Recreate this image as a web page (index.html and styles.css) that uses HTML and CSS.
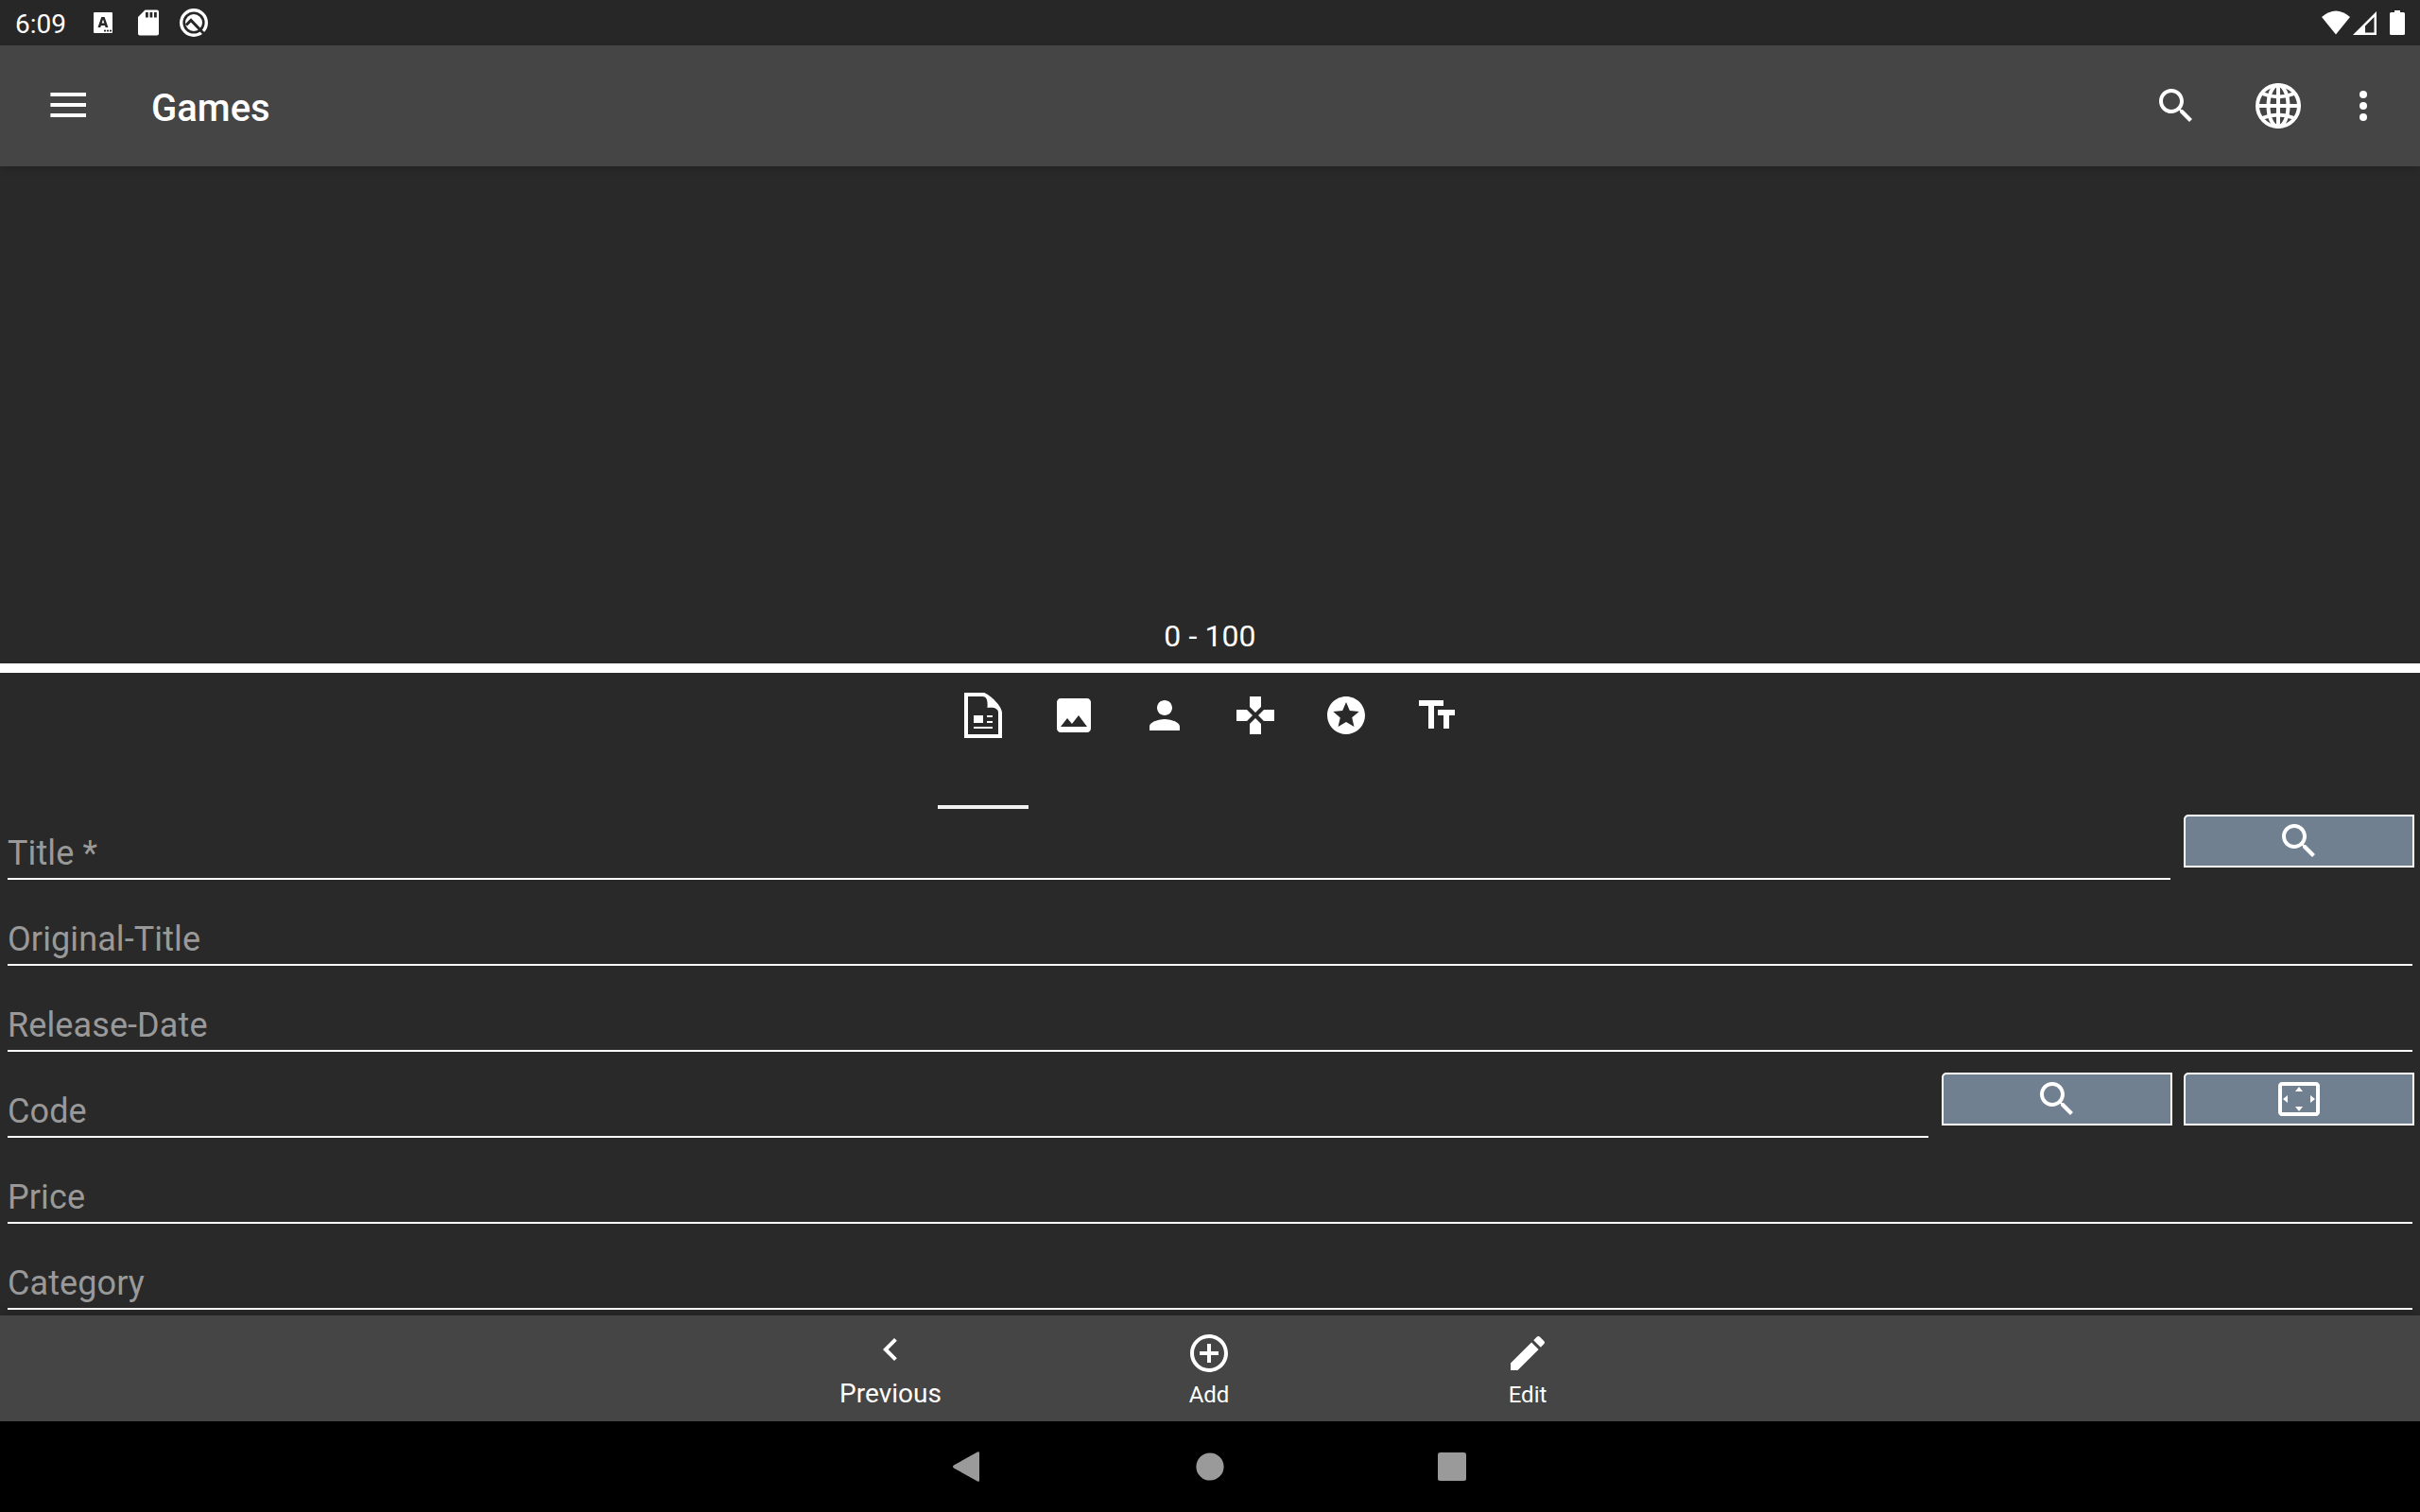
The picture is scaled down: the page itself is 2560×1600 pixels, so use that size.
FILE: index.html
```html
<!DOCTYPE html>
<html lang="en">
<head>
<meta charset="utf-8">
<title>Games</title>
<link rel="stylesheet" href="styles.css">
</head>
<body>
<svg class="defs" aria-hidden="true">
  <symbol id="search" viewBox="0 0 24 24"><path d="M15.5 14h-.79l-.28-.27C15.41 12.59 16 11.11 16 9.5 16 5.91 13.09 3 9.5 3S3 5.91 3 9.5 5.91 16 9.5 16c1.61 0 3.09-.59 4.23-1.57l.27.28v.79l5 4.99L20.49 19l-4.99-5zm-6 0C7.01 14 5 11.99 5 9.5S7.01 5 9.5 5 14 7.01 14 9.5 11.99 14 9.5 14z"/></symbol>
</svg>
<div class="screen">
  <header class="status-bar">
    <span class="clock">6:09</span>
    <svg class="notif" viewBox="0 0 132 48">
      <path fill-rule="evenodd" d="M3 13h16q1 0 1 1v20q0 1-1 1H1q-1 0-1-1V14q0-1 1-1zM8.300 18L4.500 29h2.800l.6-2h4.100l.6 2h2.800L11.600 18zM8.700 24.500L10 20.500l1.300 4z"/>
      <g class="cut"><circle cx="12" cy="32.600" r="1.100"/><circle cx="15" cy="32.600" r="1.100"/><circle cx="18" cy="32.600" r="1.100"/></g>
      <path d="M54.500 10.500H67q2 0 2 2V35.500q0 2-2 2H49q-2 0-2-2V18z"/>
      <path class="cut" d="M55 13h2.800v5.500H55zM59.500 13h2.800v5.500h-2.800zM64 13h2.800v5.500H64z"/>
      <circle class="ring" cx="106" cy="24" r="13.300"/>
      <circle cx="106" cy="24" r="9"/>
      <path class="gap" d="M98 26.500L103 21.500 117 36"/>
    </svg>
    <svg class="signals" viewBox="0 0 88 48">
      <path d="M0 18Q15 5 30 18L15 36.500z"/>
      <path fill-rule="evenodd" d="M33 37L58 12V37zM46 34.500H55.500V18L46 27.500z"/>
      <path d="M77 11h6v2h3.500q1.500 0 1.500 1.500v21q0 1.500-1.500 1.500h-13q-1.500 0-1.500-1.500v-21q0-1.500 1.500-1.500H77z"/>
    </svg>
  </header>
  <div class="app-bar">
    <svg class="menu" viewBox="0 0 38 26"><path d="M.4 0h37.600v4H.4zM.4 11h37.600v4H.4zM.4 22h37.600v4H.4z"/></svg>
    <h1 class="title">Games</h1>
    <svg class="icon"><use href="#search"/></svg>
    <svg class="icon globe" viewBox="0 0 48 48">
      <circle cx="24" cy="24" r="22"/>
      <ellipse cx="24" cy="24" rx="10.500" ry="22"/>
      <path d="M24 2v44M2 24h44M7 11Q24 18 41 11M7 37Q24 30 41 37"/>
    </svg>
    <svg class="icon" viewBox="0 0 48 48"><circle cx="24" cy="12" r="4"/><circle cx="24" cy="24" r="4"/><circle cx="24" cy="36" r="4"/></svg>
  </div>
  <section class="list-pane"><span class="range">0 - 100</span></section>
  <nav class="tabs">
    <span class="tab selected"><svg class="icon" viewBox="0 0 48 48"><path fill-rule="evenodd" d="M4 0H25C31 2 44 14 44 21V48H4zM8 4V44H40V21C40 17 36 15 28.500 16 29 8 28 4 23 4z"/><path d="M14 24h10v8H14zM28 24h6v2h-6zM28 30h6v2h-6zM14 36h20v2H14z"/></svg></span>
    <span class="tab"><svg class="icon" viewBox="0 0 24 24"><path d="M21 19V5c0-1.100-.9-2-2-2H5c-1.100 0-2 .9-2 2v14c0 1.100.9 2 2 2h14c1.100 0 2-.9 2-2zM8.500 13.500l2.500 3.010L14.500 12l4.500 6H5l3.500-4.500z"/></svg></span>
    <span class="tab"><svg class="icon" viewBox="0 0 24 24"><path d="M12 12c2.210 0 4-1.790 4-4s-1.790-4-4-4-4 1.790-4 4 1.790 4 4 4zm0 2c-2.670 0-8 1.340-8 4v2h16v-2c0-2.660-5.330-4-8-4z"/></svg></span>
    <span class="tab"><svg class="icon" viewBox="0 0 24 24"><path d="M15 7.500V2H9v5.500l3 3 3-3zM7.500 9H2v6h5.500l3-3-3-3zM9 16.500V22h6v-5.500l-3-3-3 3zM16.500 9l-3 3 3 3H22V9h-5.500z"/></svg></span>
    <span class="tab"><svg class="icon" viewBox="0 0 24 24"><path d="M11.990 2C6.470 2 2 6.480 2 12s4.470 10 9.990 10C17.520 22 22 17.520 22 12S17.520 2 11.990 2zm4.240 16L12 15.450 7.770 18l1.120-4.810-3.730-3.230 4.920-.42L12 5l1.920 4.530 4.920.42-3.730 3.230L16.230 18z"/></svg></span>
    <span class="tab"><svg class="icon" viewBox="0 0 24 24"><path d="M2.500 4v3h5v12h3V7h5V4h-13zm19 5h-9v3h3v7h3v-7h3V9z"/></svg></span>
  </nav>
  <main class="form">
    <div class="row"><label class="field">Title *</label><button class="btn"><svg class="icon"><use href="#search"/></svg></button></div>
    <div class="row"><label class="field">Original-Title</label></div>
    <div class="row"><label class="field">Release-Date</label></div>
    <div class="row"><label class="field">Code</label><button class="btn"><svg class="icon"><use href="#search"/></svg></button><button class="btn"><svg class="icon" viewBox="0 0 24 24"><path d="M12.010 5.500L10 8h4l-1.990-2.500zM18 10v4l2.500-1.990L18 10zM6 10l-2.500 2.010L6 14v-4zm8 6h-4l2.010 2.500L14 16zm7-13H3c-1.100 0-2 .9-2 2v14c0 1.100.9 2 2 2h18c1.100 0 2-.9 2-2V5c0-1.100-.9-2-2-2zm0 16.010H3V4.990h18v14.020z"/></svg></button></div>
    <div class="row"><label class="field">Price</label></div>
    <div class="row"><label class="field">Category</label></div>
  </main>
  <footer class="bottom-bar">
    <div class="action active"><svg class="icon" viewBox="0 0 24 24"><path d="M15.410 7.410L14 6l-6 6 6 6 1.410-1.410L10.830 12z"/></svg><span>Previous</span></div>
    <div class="action"><svg class="icon" viewBox="0 0 24 24"><path d="M13 7h-2v4H7v2h4v4h2v-4h4v-2h-4V7zm-1-5C6.480 2 2 6.480 2 12s4.480 10 10 10 10-4.480 10-10S17.520 2 12 2zm0 18c-4.410 0-8-3.590-8-8s3.590-8 8-8 8 3.590 8 8-3.590 8-8 8z"/></svg><span>Add</span></div>
    <div class="action"><svg class="icon" viewBox="0 0 24 24"><path d="M3 17.250V21h3.750L17.810 9.940l-3.750-3.750L3 17.250zM20.710 7.040c.39-.39.39-1.020 0-1.410l-2.340-2.340c-.39-.39-1.020-.39-1.410 0l-1.830 1.830 3.750 3.750 1.830-1.830z"/></svg><span>Edit</span></div>
  </footer>
  <div class="system-nav">
    <svg viewBox="0 0 32 32"><path d="M1 14.500L26 .5q2-1 2 1v29q0 2-2 1L1 17.500q-2-1.500 0-3z"/></svg>
    <svg viewBox="0 0 32 32"><circle cx="16" cy="16" r="14.600"/></svg>
    <svg viewBox="0 0 32 32"><rect x="1" y="1" width="30" height="30" rx="2.500"/></svg>
  </div>
</div>
</body>
</html>
```
FILE: styles.css
```css
* { box-sizing: border-box; }
body { margin: 0; background: #292929; color: #fff; font-family: Roboto, "Noto Sans", sans-serif; }
svg { display: block; fill: #fff; flex: none; }
.defs { display: none; }
.screen { width: 2560px; height: 1600px; display: flex; flex-direction: column; overflow: hidden; }
.icon { width: 48px; height: 48px; }

.status-bar { height: 48px; flex: none; display: flex; align-items: center; background: #272727; padding: 0 16px; }
.clock { width: 83px; font-size: 28px; line-height: 33px; padding-top: 3px; }
.notif { width: 132px; height: 48px; }
.notif .cut { fill: #272727; }
.notif .ring { fill: none; stroke: #fff; stroke-width: 3.4; }
.notif .gap { fill: none; stroke: #272727; stroke-width: 3; }
.signals { width: 88px; height: 48px; margin-left: auto; }

.app-bar { height: 128px; flex: none; display: flex; align-items: center; background: #454545; padding: 0 36px 0 53px; box-shadow: 0 2px 8px rgba(0, 0, 0, .18); }
.menu { width: 38px; height: 26px; margin-bottom: 2px; }
.title { margin: 5px auto 0 69px; font-size: 40px; line-height: 48px; font-weight: 500; }
.globe { fill: none; stroke: #fff; stroke-width: 4; margin: 0 42px 0 60px; }

.list-pane { height: 536px; flex: none; display: flex; align-items: flex-end; justify-content: center; padding-bottom: 10px; border-bottom: 10px solid #fff; }
.range { font-size: 32px; line-height: 38px; letter-spacing: .1px; }

.tabs { height: 150px; flex: none; display: flex; justify-content: center; padding-bottom: 6px; }
.tab { width: 96px; display: flex; justify-content: center; padding-top: 21px; }
.selected { border-bottom: 4px solid #f0f0f0; }

.form { height: 530px; flex: none; padding: 0 6px 0 8px; overflow: hidden; }
.row { height: 91px; display: flex; align-items: flex-start; }
.field { flex: 1; height: 69px; margin-right: 2px; border-bottom: 2px solid #fff; color: #999; font-size: 36px; line-height: 42px; letter-spacing: .1px; padding-top: 20px; }
.btn { width: 244px; height: 56px; margin-left: 12px; padding: 0; display: flex; align-items: center; justify-content: center; background: #708090; border: 2px solid #fff; border-radius: 5px 0 0; }

.bottom-bar { height: 112px; flex: none; display: flex; justify-content: center; background: #454545; padding-right: 2px; box-shadow: 0 -2px 8px rgba(0, 0, 0, .18); }
.action { width: 337px; display: flex; flex-direction: column; align-items: center; padding-top: 16px; font-size: 24px; line-height: 28px; gap: 6px; }
.active { padding-top: 12px; font-size: 28px; line-height: 33px; }

.system-nav { height: 96px; flex: none; display: flex; align-items: center; justify-content: center; gap: 224px; background: #000; }
.system-nav svg { width: 32px; height: 32px; fill: #9a9a9a; }
```
